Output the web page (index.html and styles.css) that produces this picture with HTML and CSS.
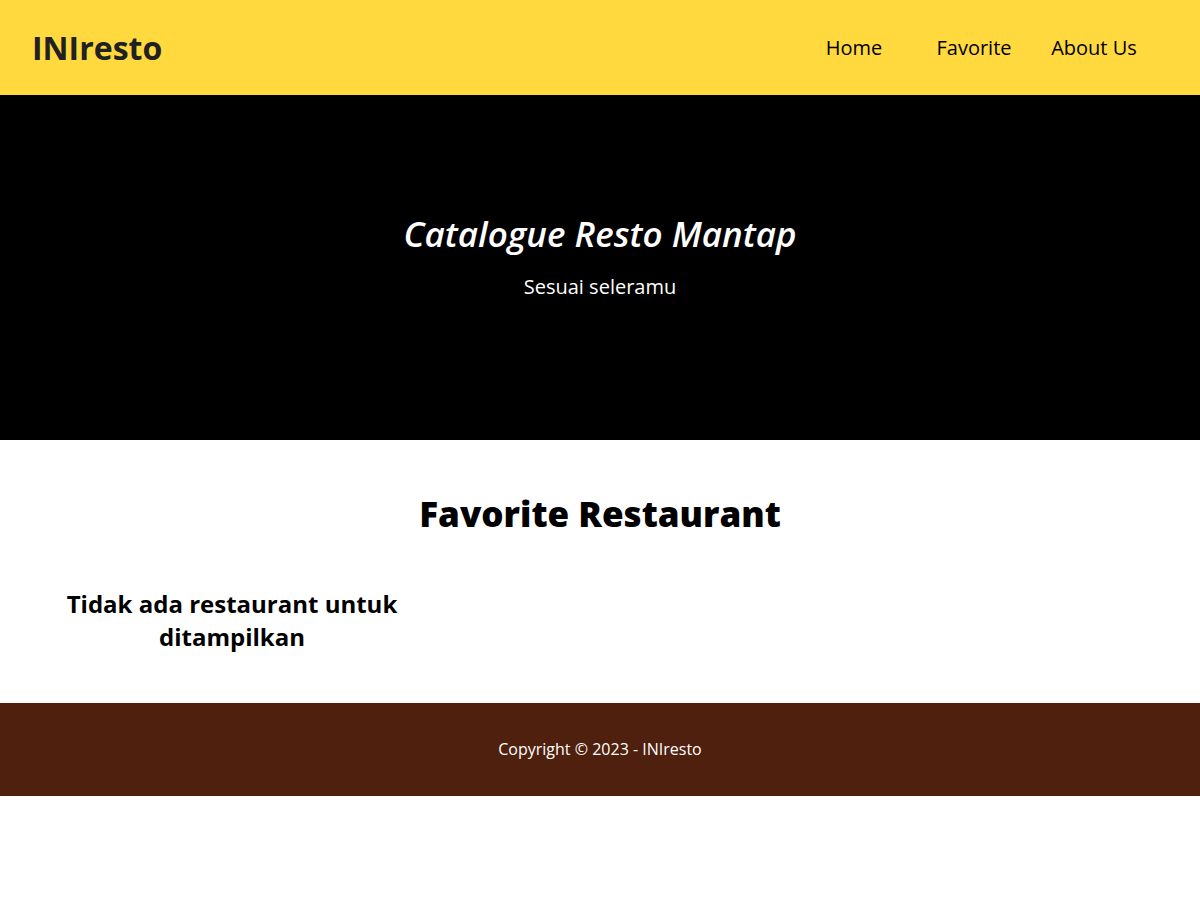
FILE: index.html
```html
<!DOCTYPE html>
<html lang="id">
<head>
<meta charset="utf-8">
<meta name="viewport" content="width=device-width, initial-scale=1">
<title>INIresto</title>
<link rel="stylesheet" href="styles.css">
</head>
<body>
<header class="header">
  <h1 class="brand">INIresto</h1>
  <nav class="nav">
    <ul class="nav-list">
      <li class="nav-item"><a class="nav-link" href="#home">Home</a></li>
      <li class="nav-item"><a class="nav-link" href="#favorite">Favorite</a></li>
      <li class="nav-item"><a class="nav-link" href="#about">About Us</a></li>
    </ul>
  </nav>
</header>
<section class="hero">
  <h2 class="hero-title">Catalogue Resto Mantap</h2>
  <p class="hero-tagline">Sesuai seleramu</p>
</section>
<main class="content">
  <h2 class="content-title">Favorite Restaurant</h2>
  <div class="restaurants">
    <p class="empty">Tidak ada restaurant untuk ditampilkan</p>
  </div>
</main>
<footer class="footer">
  <p class="copyright">Copyright © 2023 - INIresto</p>
</footer>
</body>
</html>
```
FILE: styles.css
```css
* {
  box-sizing: border-box;
  margin: 0;
  padding: 0;
}

body {
  font-family: "Open Sans", sans-serif;
  color: #000;
  background: #fff;
}

.header {
  display: flex;
  flex-wrap: wrap;
  align-items: center;
  justify-content: space-between;
  padding: 24px 32px;
  background: #ffd93d;
}

.brand {
  font-size: 32px;
  line-height: 47px;
  font-weight: 700;
  color: #212121;
}

.nav {
  padding: 0 14px;
}

.nav-list {
  display: flex;
  list-style: none;
}

.nav-item {
  width: 120px;
  text-align: center;
}

.nav-link {
  font-size: 20px;
  font-weight: 400;
  color: #000;
  text-decoration: none;
}

.hero {
  display: flex;
  flex-direction: column;
  align-items: center;
  justify-content: center;
  gap: 12px;
  min-height: 345px;
  padding: 16px 16px 39px;
  color: #fff;
  background: #000;
  text-align: center;
}

.hero-title {
  font-size: 35px;
  line-height: 48px;
  font-weight: 600;
  font-style: italic;
}

.hero-tagline {
  font-size: 20px;
  line-height: 33px;
}

.content {
  padding: 48px 48px 50px;
}

.content-title {
  font-size: 35px;
  line-height: 52px;
  font-weight: 800;
  text-align: center;
}

.restaurants {
  display: grid;
  grid-template-columns: repeat(auto-fill, minmax(300px, 1fr));
  padding: 47px 0 0;
}

.empty {
  font-size: 24px;
  line-height: 33px;
  font-weight: 700;
  text-align: center;
}

.footer {
  padding: 32px;
  color: #fff;
  background: #4f200d;
  text-align: center;
}

.copyright {
  font-size: 16px;
  line-height: 29px;
}
```
